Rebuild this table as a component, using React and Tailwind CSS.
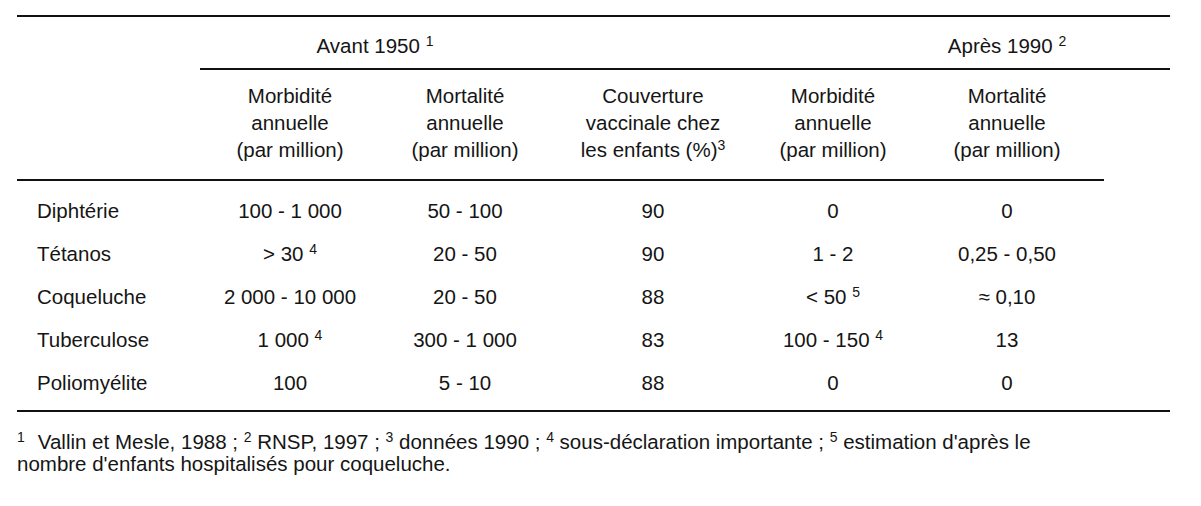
const cols = "grid grid-cols-[183px_180px_170px_206px_154px_194px]";

const rows = [
  ["Diphtérie", ["100 - 1 000"], ["50 - 100"], ["90"], ["0"], ["0"]],
  ["Tétanos", ["> 30", "4"], ["20 - 50"], ["90"], ["1 - 2"], ["0,25 - 0,50"]],
  ["Coqueluche", ["2 000 - 10 000"], ["20 - 50"], ["88"], ["< 50", "5"], ["≈ 0,10"]],
  ["Tuberculose", ["1 000", "4"], ["300 - 1 000"], ["83"], ["100 - 150", "4"], ["13"]],
  ["Poliomyélite", ["100"], ["5 - 10"], ["88"], ["0"], ["0"]],
];

function Sup({ children, space = true }) {
  return (
    <>
      {space ? " " : null}
      <sup className="text-[14px]">{children}</sup>
    </>
  );
}

function Cell({ value }) {
  const [text, note] = value;
  return (
    <div className="text-center">
      {text}
      {note ? <Sup>{note}</Sup> : null}
    </div>
  );
}

function App() {
  return (
    <div
      className="min-h-[506px] w-[1201px] bg-white text-[#151515] text-[20.5px]"
      style={{ fontFamily: '"Liberation Sans", Arial, sans-serif' }}
    >
      <div className="ml-[17px] w-[1153px] pt-[15px]">
        {/* group headers */}
        <div className="flex border-t-2 border-[#111]">
          <div className="w-[183px] shrink-0" />
          <div className="flex flex-1 border-b-2 border-[#111] pt-[15px] pb-[9px] leading-[27px]">
            <div className="w-[350px] text-center">
              Avant 1950<Sup>1</Sup>
            </div>
            <div className="w-[360px]" />
            <div className="w-[194px] text-center">
              Après 1990<Sup>2</Sup>
            </div>
          </div>
        </div>

        {/* column headers */}
        <div className={`${cols} w-[1087px] border-b-2 border-[#111] pt-[12px] pb-[16px] leading-[27px]`}>
          <div />
          <div className="text-center">
            Morbidité<br />annuelle<br />(par million)
          </div>
          <div className="text-center">
            Mortalité<br />annuelle<br />(par million)
          </div>
          <div className="text-center">
            Couverture<br />vaccinale chez<br />les enfants (%)<Sup space={false}>3</Sup>
          </div>
          <div className="text-center">
            Morbidité<br />annuelle<br />(par million)
          </div>
          <div className="text-center">
            Mortalité<br />annuelle<br />(par million)
          </div>
        </div>

        {/* data */}
        <div className="border-b-2 border-[#111] pt-[9px] pb-[5px]">
          {rows.map(([label, ...vals]) => (
            <div key={label} className={`${cols} h-[43px] items-center`}>
              <div className="pl-[20px]">{label}</div>
              {vals.map((v, i) => (
                <Cell key={i} value={v} />
              ))}
            </div>
          ))}
        </div>

        {/* notes */}
        <div className="mt-[19px] leading-[22px]">
          <sup className="text-[14px] mr-[13px]">1</sup>Vallin et Mesle, 1988 ; <sup className="text-[14px]">2</sup>{" "}
          RNSP, 1997 ; <sup className="text-[14px]">3</sup> données 1990 ;{" "}
          <sup className="text-[14px]">4</sup> sous-déclaration importante ;{" "}
          <sup className="text-[14px]">5</sup> estimation d'après le
          <br />
          nombre d'enfants hospitalisés pour coqueluche.
        </div>
      </div>
    </div>
  );
}

export default App;
